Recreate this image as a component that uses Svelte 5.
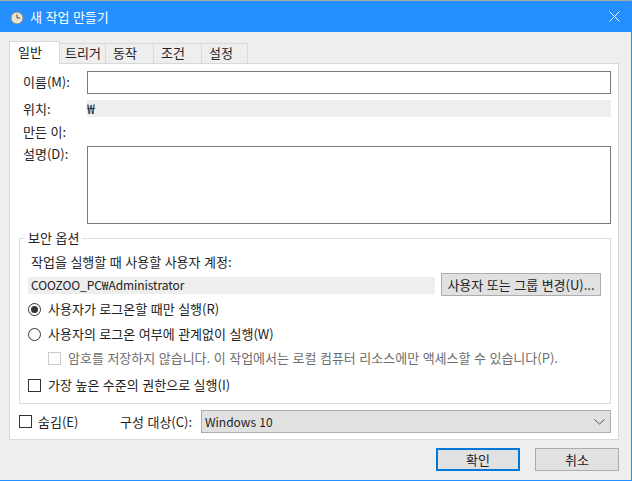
<script>
  const tabs = ["일반", "트리거", "동작", "조건", "설정"];
</script>

<div class="window">
  <div class="titlebar">
    <svg class="clock" width="14" height="14" viewBox="0 0 14 14">
      <circle cx="7" cy="7" r="6" fill="#e9e4cf" stroke="#85857a" />
      <path d="M7 3.5V7H10" fill="none" stroke="#4a4a44" stroke-width="1" />
    </svg>
    <span class="title">새 작업 만들기</span>
    <svg class="close" width="11" height="11" viewBox="0 0 11 11">
      <path d="M0.5 0.5L10.5 10.5M10.5 0.5L0.5 10.5" stroke="#fff" fill="none" />
    </svg>
  </div>

  <div class="tabs">
    {#each tabs as tab, i}
      <div class="tab" class:active={i === 0}>{tab}</div>
    {/each}
  </div>

  <div class="panel">
    <div class="row first">
      <div class="label">이름(M):</div>
      <div class="input name"></div>
    </div>
    <div class="row gap">
      <div class="label">위치:</div>
      <div class="readonly path">₩</div>
    </div>
    <div class="row gap">
      <div class="label">만든 이:</div>
    </div>
    <div class="row gap top">
      <div class="label">설명(D):</div>
      <div class="input desc"></div>
    </div>

    <div class="group">
      <div class="legend">보안 옵션</div>
      <div class="account-label">작업을 실행할 때 사용할 사용자 계정:</div>
      <div class="account">
        <div class="readonly user">COOZOO_PC₩Administrator</div>
        <div class="button change">사용자 또는 그룹 변경(U)...</div>
      </div>
      <div class="option o1">
        <span class="radio on"></span>
        <span>사용자가 로그온할 때만 실행(R)</span>
      </div>
      <div class="option o2">
        <span class="radio"></span>
        <span>사용자의 로그온 여부에 관계없이 실행(W)</span>
      </div>
      <div class="option o3 disabled">
        <span class="check"></span>
        <span>암호를 저장하지 않습니다. 이 작업에서는 로컬 컴퓨터 리소스에만 액세스할 수 있습니다(P).</span>
      </div>
      <div class="option o4">
        <span class="check"></span>
        <span>가장 높은 수준의 권한으로 실행(I)</span>
      </div>
    </div>

    <div class="bottom">
      <span class="check"></span>
      <span class="hide">숨김(E)</span>
      <span class="target">구성 대상(C):</span>
      <div class="select">
        <span class="latin">Windows 10</span>
        <svg width="11" height="6" viewBox="0 0 11 6">
          <path d="M0.5 0.5L5.5 5L10.5 0.5" fill="none" stroke="#555" />
        </svg>
      </div>
    </div>
  </div>

  <div class="actions">
    <div class="button ok">확인</div>
    <div class="button cancel">취소</div>
  </div>
</div>

<style>
  :global(body) {
    margin: 0;
  }

  .window {
    width: 632px;
    height: 481px;
    box-sizing: border-box;
    background: #eeeeee;
    border-top: 1px solid #a9a9a9;
    border-right: 1px solid #2490ff;
    border-bottom: 1px solid #2490ff;
    font-family: "Noto Sans CJK KR", "Noto Sans", sans-serif;
    font-size: 13px;
    line-height: 16px;
    word-spacing: 0.6px;
    color: #222;
    overflow: hidden;
  }

  .titlebar {
    height: 31px;
    background: #2490ff;
    display: flex;
    align-items: center;
    padding: 0 11px 0 10px;
    color: #fff;
  }

  .clock {
    margin-top: 2px;
  }

  .title {
    margin-left: 6px;
    flex: 1;
  }

  .tabs {
    display: grid;
    grid-template-columns: 51px 46px 48px 48px 46px;
    align-items: end;
    height: 22px;
    margin: 9px 0 0 9px;
  }

  .tab {
    height: 20px;
    box-sizing: border-box;
    padding: 1px 0 0 7px;
    border: 1px solid #d9d9d9;
    border-bottom: none;
    border-left: none;
  }

  .tab:nth-child(2) {
    padding-left: 5px;
  }

  .tab.active {
    padding: 2px 0 0 8px;
    background: #fff;
    border-left: 1px solid #d9d9d9;
    position: relative;
    z-index: 1;
    margin-bottom: -1px;
    height: 23px;
  }

  .panel {
    width: 610px;
    height: 377px;
    box-sizing: border-box;
    margin-left: 9px;
    padding: 7px 7px 0 9px;
    background: #fff;
    border: 1px solid #d9d9d9;
  }

  .row {
    display: flex;
    align-items: center;
  }

  .row.first .label {
    margin-top: -2px;
  }

  .row.gap {
    margin-top: 6px;
    min-height: 17px;
  }

  .row.top {
    align-items: flex-start;
  }

  .label {
    width: 68px;
    box-sizing: border-box;
    padding-left: 4px;
  }

  .input {
    width: 524px;
    box-sizing: border-box;
    background: #fff;
    border: 1px solid #7a7a7a;
  }

  .input.name {
    height: 23px;
  }

  .input.desc {
    height: 78px;
  }

  .readonly {
    height: 17px;
    background: #eeeeee;
    box-sizing: border-box;
  }

  .path {
    width: 524px;
    font-size: 14px;
  }

  .group {
    position: relative;
    height: 166px;
    box-sizing: border-box;
    margin-top: 14px;
    padding: 15px 0 0 8px;
    border: 1px solid #dcdcdc;
  }

  .legend {
    position: absolute;
    top: -9px;
    left: 5px;
    padding: 0 3px;
    background: #fff;
  }

  .account-label {
    padding-left: 3px;
  }

  .account {
    display: flex;
    align-items: center;
    margin-top: 3px;
  }

  .user {
    width: 407px;
    padding-left: 3px;
    margin-top: 1px;
    font-size: 12px;
    letter-spacing: -0.08px;
  }

  .latin {
    font-size: 12px;
  }

  .button {
    box-sizing: border-box;
    height: 23px;
    background: #e1e1e1;
    border: 1px solid #adadad;
    display: flex;
    align-items: center;
    justify-content: center;
  }

  .change {
    width: 160px;
    margin-left: 6px;
  }

  .option {
    display: flex;
    align-items: center;
    gap: 7px;
  }

  .o1 {
    margin-top: 5px;
  }

  .o2 {
    margin-top: 9px;
  }

  .o3 {
    margin-top: 8px;
    margin-left: 20px;
  }

  .o4 {
    margin-top: 11px;
  }

  .disabled {
    color: #6d6d6d;
  }

  .radio {
    width: 13px;
    height: 13px;
    box-sizing: border-box;
    border: 1px solid #333;
    border-radius: 50%;
    display: flex;
    align-items: center;
    justify-content: center;
  }

  .radio.on::after {
    content: "";
    width: 7px;
    height: 7px;
    border-radius: 50%;
    background: #333;
  }

  .check {
    width: 13px;
    height: 13px;
    box-sizing: border-box;
    border: 1px solid #333;
    background: #fff;
    flex: none;
  }

  .disabled .check {
    border-color: #cccccc;
  }

  .bottom {
    display: flex;
    align-items: center;
    margin-top: 6px;
    height: 23px;
  }

  .hide {
    margin-left: 6px;
    width: 82px;
  }

  .target {
    width: 81px;
  }

  .select {
    width: 410px;
    height: 23px;
    box-sizing: border-box;
    background: #e1e1e1;
    border: 1px solid #adadad;
    display: flex;
    align-items: center;
    justify-content: space-between;
    padding: 0 5px 0 3px;
  }

  .actions {
    display: flex;
    margin: 8px 0 0 436px;
    gap: 15px;
  }

  .ok,
  .cancel {
    width: 84px;
  }

  .ok {
    border: 2px solid #0078d7;
  }
</style>
